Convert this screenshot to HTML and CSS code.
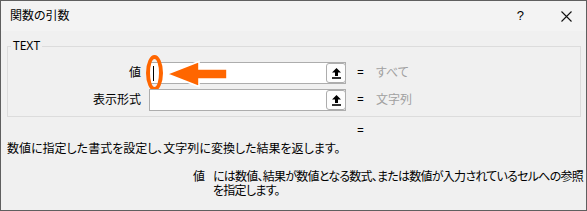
FILE: index.html
```html
<!DOCTYPE html>
<html lang="ja">
<head>
<meta charset="utf-8">
<title>関数の引数</title>
<link rel="stylesheet" href="styles.css">
</head>
<body>
<div class="window">
  <div class="titlebar">
    <span class="title">関数の引数</span>
    <span class="tb-help">?</span>
    <svg class="tb-close" width="11" height="11" viewBox="0 0 11 11"><path d="M0.5 0.5 L10.5 10.5 M10.5 0.5 L0.5 10.5" stroke="#111" stroke-width="1.1" fill="none"/></svg>
  </div>
  <div class="content">
    <fieldset class="group">
      <legend class="group-title">TEXT</legend>
      <div class="args">
        <span class="arg-label">値</span>
        <div class="field">
          <span class="caret"></span>
          <span class="ref-btn"><svg width="20" height="20" viewBox="0 0 20 20"><path d="M10.5 5 L15 9.5 L12 9.5 L12 13 L9 13 L9 9.5 L6 9.5 Z" fill="#000"/><rect x="6" y="14.2" width="9" height="1.6" fill="#000"/></svg></span>
          <span class="mark-ring"></span>
          <svg class="mark-arrow" width="66" height="30" viewBox="0 0 66 30"><path d="M3 15 L35 2.5 L35 10 L63 10 L63 20 L35 20 L35 27.5 Z" fill="#ff6600" stroke="#fff" stroke-width="1.6" stroke-linejoin="miter"/></svg>
        </div>
        <span class="eq">=</span>
        <span class="val">すべて</span>

        <span class="arg-label">表示形式</span>
        <div class="field">
          <span class="ref-btn"><svg width="20" height="20" viewBox="0 0 20 20"><path d="M10.5 5 L15 9.5 L12 9.5 L12 13 L9 13 L9 9.5 L6 9.5 Z" fill="#000"/><rect x="6" y="14.2" width="9" height="1.6" fill="#000"/></svg></span>
        </div>
        <span class="eq">=</span>
        <span class="val">文字列</span>
      </div>
    </fieldset>
    <div class="result">=</div>
    <p class="desc">数値に指定した書式を設定し、文字列に変換した結果を返します。</p>
    <div class="help-row">
      <span class="help-name">値</span>
      <p class="help-text">には数値、結果が数値となる数式、または数値が入力されているセルへの参照<br>を指定します。</p>
    </div>
  </div>
</div>
</body>
</html>
```

FILE: styles.css
```css
* { box-sizing: border-box; }
html, body { margin: 0; padding: 0; }
body {
  width: 587px;
  height: 211px;
  font-family: "Noto Sans", "Noto Sans CJK JP", sans-serif;
  font-size: 12px;
  font-feature-settings: "palt";
  color: #000;
  background: #f0f0f0;
  overflow: hidden;
}
.window {
  width: 587px;
  height: 211px;
  border: 1px solid #5f5f5f;
  background: #f0f0f0;
  display: flex;
  flex-direction: column;
}
.titlebar {
  height: 30px;
  flex: none;
  display: flex;
  align-items: center;
  padding-left: 9px;
  background: #f3f3f3;
}
.title {
  flex: 1;
  line-height: 16px;
}
.tb-help {
  font-family: "Liberation Sans", sans-serif;
  font-size: 13px;
  margin-right: 37px;
  line-height: 16px;
}
.tb-close {
  margin-right: 14px;
  display: block;
}
.content {
  flex: 1;
  padding: 0 5px 0 6px;
}
.group {
  margin: 8px 0 0 0;
  padding: 9px 0 5px 0;
  border: 1px solid #dcdcdc;
  min-width: 0;
}
.group-title {
  margin-left: 3px;
  padding: 0 2px;
  line-height: 14px;
  font-size: 12px;
}
.args {
  display: grid;
  grid-template-columns: 133px auto auto 1fr;
  row-gap: 5px;
  align-items: center;
}
.arg-label {
  text-align: right;
  line-height: 14px;
}
.field {
  position: relative;
  margin-left: 8px;
  width: 197px;
  height: 22px;
  border: 1px solid #adadad;
  background: #fff;
  display: flex;
  align-items: center;
}
.caret {
  width: 1px;
  height: 15px;
  margin-left: 3px;
  background: #000;
}
.ref-btn {
  margin-left: auto;
  margin-right: -1px;
  width: 20px;
  height: 20px;
  border: 1px solid #adadad;
  border-radius: 3px;
  background: #fdfdfd;
  display: flex;
  align-items: center;
  justify-content: center;
}
.ref-btn svg { display: block; flex: none; margin: -1px; }
.mark-ring {
  position: absolute;
  left: -4px;
  top: -8px;
  width: 17px;
  height: 36px;
  border: 4px solid #ff6600;
  border-radius: 50%;
}
.mark-arrow {
  position: absolute;
  left: 14px;
  top: -4px;
  display: block;
}
.eq {
  margin-left: 11px;
  line-height: 14px;
}
.val {
  margin-left: 12px;
  color: #a0a0a0;
  line-height: 14px;
}
.result {
  margin-top: 7px;
  padding-left: 350px;
  line-height: 14px;
}
.desc {
  margin: 4px 0 0 0;
  line-height: 14px;
}
.help-row {
  margin-top: 14px;
  display: flex;
  padding-left: 186px;
}
.help-name {
  flex: none;
  width: 20px;
  line-height: 14px;
}
.help-text {
  margin: 0;
  line-height: 14px;
  white-space: nowrap;
  letter-spacing: -0.75px;
}
```
